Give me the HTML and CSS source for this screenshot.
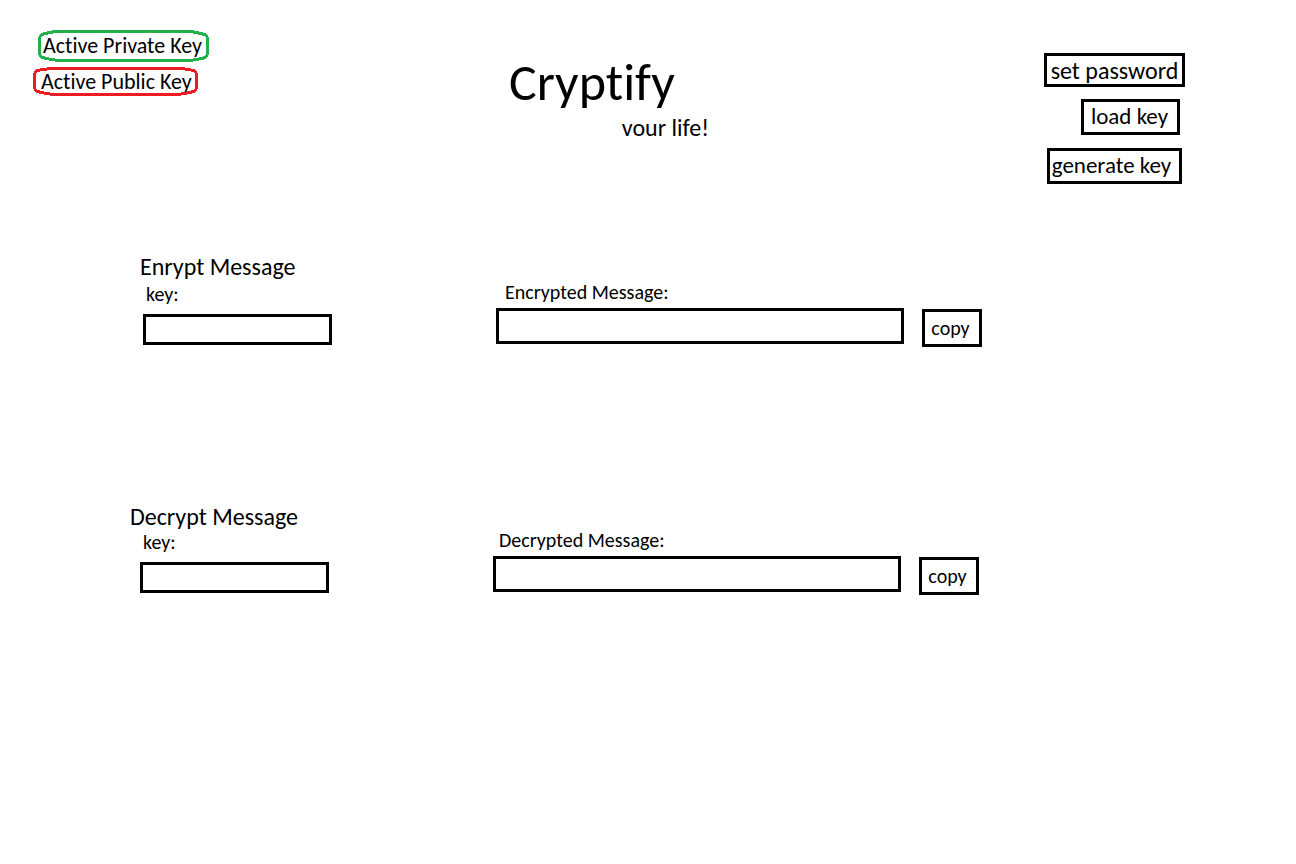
FILE: index.html
```html
<!DOCTYPE html>
<html lang="en">
<head>
<meta charset="utf-8">
<title>Cryptify</title>
<link rel="stylesheet" href="styles.css">
</head>
<body>
<header class="header">
  <div class="statuses">
    <div class="status status-private">
      <svg class="outline" viewBox="0 0 171 32" preserveAspectRatio="none" aria-hidden="true"><path d="M1.5 8 3 5 7 3.500 17 1.500H153L163 3.500 168 5 169.500 8V24L168 27 164 28.500 152 30.500H20L8 28.500 3 27 1.500 24Z"/></svg>
      <span>Active Private Key</span>
    </div>
    <div class="status status-public">
      <svg class="outline" viewBox="0 0 165 29" preserveAspectRatio="none" aria-hidden="true"><path d="M1.5 7 3 4 7 3 17 1.500H149L158 3 162 4 163.500 7V21L162 24 157 25.500 145 27.500H20L8 25.500 3 24 1.500 21Z"/></svg>
      <span>Active Public Key</span>
    </div>
  </div>
  <div class="brand">
    <h1 class="title">Cryptify</h1>
    <p class="tagline">vour life!</p>
  </div>
  <nav class="actions">
    <button class="button button-password" type="button">set password</button>
    <button class="button button-load" type="button">load key</button>
    <button class="button button-generate" type="button">generate key</button>
  </nav>
</header>
<main>
  <section class="panel panel-encrypt">
    <div class="key-side">
      <h2 class="heading">Enrypt Message</h2>
      <label class="label key-label" for="encrypt-key">key:</label>
      <input class="field key-field" id="encrypt-key" type="text">
    </div>
    <div class="message-side">
      <label class="label message-label" for="encrypted">Encrypted Message:</label>
      <div class="message-row">
        <input class="field message-field" id="encrypted" type="text">
        <button class="button button-copy" type="button">copy</button>
      </div>
    </div>
  </section>
  <section class="panel panel-decrypt">
    <div class="key-side">
      <h2 class="heading">Decrypt Message</h2>
      <label class="label key-label" for="decrypt-key">key:</label>
      <input class="field key-field" id="decrypt-key" type="text">
    </div>
    <div class="message-side">
      <label class="label message-label" for="decrypted">Decrypted Message:</label>
      <div class="message-row">
        <input class="field message-field" id="decrypted" type="text">
        <button class="button button-copy" type="button">copy</button>
      </div>
    </div>
  </section>
</main>
</body>
</html>
```
FILE: styles.css
```css
* {
  box-sizing: border-box;
}

body {
  margin: 0;
  background: #fff;
  color: #000;
  font-family: Calibri, Carlito, Lato, sans-serif;
  font-size: 22px;
  font-variant-ligatures: none;
}

h1, h2, p {
  margin: 0;
  font-weight: 400;
}

.header {
  display: grid;
  grid-template-columns: 476fr 535fr 141px;
  align-items: start;
  padding: 30px 111px 0 33px;
}

.statuses {
  display: flex;
  flex-direction: column;
  align-items: flex-start;
  gap: 5px;
}

.status {
  position: relative;
  line-height: 32px;
  white-space: nowrap;
}

.status-private {
  width: 171px;
  height: 32px;
  margin-left: 5px;
  padding-left: 5px;
}

.status-public {
  width: 165px;
  height: 29px;
  padding-left: 8px;
  line-height: 30px;
}

.outline {
  position: absolute;
  inset: 0;
  width: 100%;
  height: 100%;
  fill: none;
  stroke-width: 3px;
  stroke-linejoin: round;
  shape-rendering: crispEdges;
}

.status-private .outline {
  stroke: #22b14c;
}

.status-public .outline {
  stroke: #ed1c24;
}

.brand {
  width: 200px;
  padding-top: 22px;
}

.title {
  font-size: 52px;
  line-height: 60px;
}

.tagline {
  padding-top: 2px;
  font-size: 24px;
  line-height: 28px;
  text-align: right;
}

.actions {
  display: flex;
  flex-direction: column;
  align-items: flex-end;
  padding-top: 23px;
}

.button {
  padding: 0;
  border: 3px solid #000;
  background: #fff;
  color: #000;
  font: inherit;
  font-variant-ligatures: none;
  white-space: nowrap;
}

.button-password {
  width: 141px;
  height: 34px;
  padding-bottom: 2px;
  font-size: 24px;
}

.button-load {
  width: 99px;
  height: 36px;
  margin: 12px 5px 13px 0;
  padding: 0 2px 6px 0;
  font-size: 23px;
}

.button-generate {
  width: 135px;
  height: 36px;
  margin-right: 3px;
  padding: 0 6px 4px 0;
  font-size: 23px;
}

.panel {
  display: grid;
  grid-template-columns: 353fr 486fr;
}

.panel-encrypt {
  padding: 68px 314px 0 143px;
}

.panel-decrypt {
  padding: 153px 317px 0 140px;
}

.heading {
  font-size: 24px;
  line-height: 30px;
}

.panel-encrypt .heading {
  margin-left: -3px;
}

.panel-decrypt .heading {
  margin: 2px 0 -2px -10px;
}

.label {
  display: block;
  font-size: 20px;
  line-height: 24px;
}

.key-label {
  padding-left: 3px;
}

.message-side {
  padding-top: 28px;
}

.panel-encrypt .message-label {
  padding-left: 9px;
}

.panel-decrypt .message-label {
  padding-left: 6px;
}

.field {
  display: block;
  margin: 0;
  padding: 0 8px;
  border: 3px solid #000;
  border-radius: 0;
  background: #fff;
  font: inherit;
}

.key-field {
  width: 189px;
  height: 31px;
  margin-top: 8px;
}

.message-row {
  display: flex;
  gap: 18px;
  margin-top: 4px;
}

.message-field {
  flex: 1;
  min-width: 0;
  height: 36px;
}

.button-copy {
  width: 60px;
  height: 38px;
  margin-top: 1px;
  padding-right: 3px;
  font-size: 20px;
}
```
